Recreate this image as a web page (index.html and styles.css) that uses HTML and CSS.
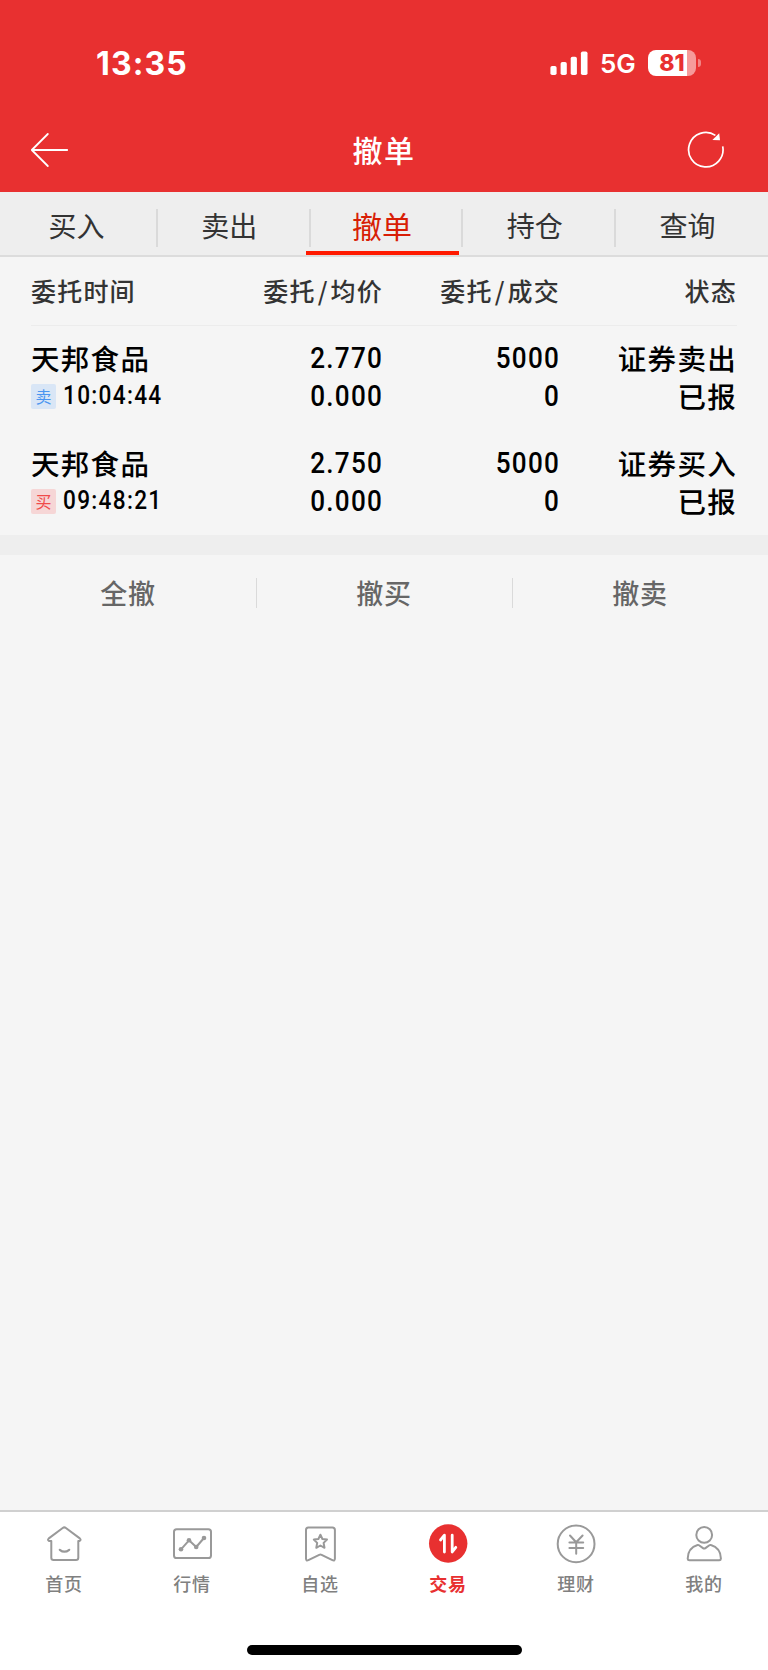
FILE: index.html
```html
<!DOCTYPE html>
<html lang="zh-CN">
<head>
  <meta charset="UTF-8">
  <meta name="viewport" content="width=device-width, initial-scale=1.0">
  <title>撤单</title>
  <link rel="stylesheet" href="styles.css">
</head>
<body>
  <div class="header">
    <div class="status-bar">
      <div class="status-time">13:35</div>
      <div class="status-right">
        <svg class="signal" width="38" height="25" viewBox="0 0 38 25" fill="#fff">
          <rect x="0.4" y="15" width="6.2" height="9" rx="1.8"/>
          <rect x="10.6" y="11" width="6.2" height="13" rx="1.8"/>
          <rect x="20.7" y="5.8" width="6.2" height="18.2" rx="1.8"/>
          <rect x="30.9" y="0.5" width="6.6" height="23.5" rx="1.8"/>
        </svg>
        <div class="network">5G</div>
        <div class="battery">81</div>
        <div class="battery-cap"></div>
      </div>
    </div>
    <div class="nav-bar">
      <svg width="40" height="40" viewBox="0 0 40 40" fill="none" stroke="#fff" stroke-width="1.8" stroke-linecap="round" stroke-linejoin="round">
        <path d="M17.8 4 L1.8 20 L17.8 36 M1.8 20 H37.2"/>
      </svg>
      <div class="nav-title">撤单</div>
      <svg width="40" height="40" viewBox="0 0 40 40" fill="none" stroke="#fff" stroke-width="1.7">
        <path d="M36.7 16.4 A17.2 17.2 0 1 1 29.4 5.4"/>
        <path d="M33.2 3.2 L34 10.3 L26.4 10.1 Z" fill="#fff" stroke="none"/>
      </svg>
    </div>
  </div>

  <div class="tabs">
    <div class="tab">买入</div>
    <div class="tab">卖出</div>
    <div class="tab active">撤单</div>
    <div class="tab">持仓</div>
    <div class="tab">查询</div>
  </div>

  <div class="orders">
    <div class="order-row order-head">
      <div>委托时间</div>
      <div>委托<span class="slash">/</span>均价</div>
      <div>委托<span class="slash">/</span>成交</div>
      <div>状态</div>
    </div>
    <div class="order-row">
      <div class="name">天邦食品</div>
      <div class="num">2.770</div>
      <div class="num">5000</div>
      <div class="state">证券卖出</div>
      <div class="time"><span class="tag sell">卖</span><span class="clock">10:04:44</span></div>
      <div class="num">0.000</div>
      <div class="num">0</div>
      <div class="state">已报</div>
    </div>
    <div class="order-row">
      <div class="name">天邦食品</div>
      <div class="num">2.750</div>
      <div class="num">5000</div>
      <div class="state">证券买入</div>
      <div class="time"><span class="tag buy">买</span><span class="clock">09:48:21</span></div>
      <div class="num">0.000</div>
      <div class="num">0</div>
      <div class="state">已报</div>
    </div>
  </div>

  <div class="actions">
    <div class="action">全撤</div>
    <div class="action">撤买</div>
    <div class="action">撤卖</div>
  </div>

  <div class="bottom-bar">
    <div class="menu">
      <div class="menu-item">
        <svg class="icon" viewBox="0 0 40 40">
          <path d="M7.3 17 H5.2 Q3 16 4.8 14.4 L18.7 4 Q20.3 2.8 21.9 4 L35.8 14.4 Q37.6 16 35.4 17 H34.3 V33.7 Q34.3 36 32 36 H9.6 Q7.3 36 7.3 33.7 Z"/>
          <path d="M15.8 25.8 Q20.4 29.6 25.2 25.8" stroke-width="2.2"/>
        </svg>
        <span>首页</span>
      </div>
      <div class="menu-item">
        <svg class="icon" viewBox="0 0 40 40">
          <rect x="2" y="5.2" width="37" height="28.8" rx="2.6"/>
          <path d="M9 25.3 L17 16.3 L24.2 23 L32 14"/>
          <g fill="#999" stroke="none">
            <circle cx="9" cy="25.3" r="2.3"/>
            <circle cx="17" cy="16.3" r="2.3"/>
            <circle cx="24.2" cy="23" r="2.3"/>
            <circle cx="32" cy="14" r="2.3"/>
          </g>
        </svg>
        <span>行情</span>
      </div>
      <div class="menu-item">
        <svg class="icon" viewBox="0 0 40 40">
          <path d="M8.3 3.4 H32.4 Q34.9 3.4 34.9 5.9 V34.6 Q34.9 37.3 32.4 36.1 L21.6 30.8 Q20.4 30.3 19.2 30.8 L8.4 36.1 Q6 37.3 6 34.6 V5.9 Q6 3.4 8.3 3.4 Z"/>
          <path d="M20.4 10.7 L22.4 15 L27 15.6 L23.6 18.9 L24.5 23.8 L20.4 21.5 L16.3 23.8 L17.2 18.9 L13.8 15.6 L18.4 15 Z"/>
        </svg>
        <span>自选</span>
      </div>
      <div class="menu-item active">
        <svg class="icon" viewBox="0 0 40 40">
          <circle cx="20.2" cy="19.5" r="19.2" fill="#e83030" stroke="none"/>
          <path d="M12.5 16 L16.4 11.2 V28 M24.2 11.2 V28 L27.8 23.3" stroke="#fff" stroke-width="2.8"/>
        </svg>
        <span>交易</span>
      </div>
      <div class="menu-item">
        <svg class="icon" viewBox="0 0 40 40">
          <circle cx="20.1" cy="19.9" r="18.4"/>
          <path d="M14 11.5 L20.2 18.2 L26.6 11.5 M13.4 18.6 H27.2 M13.4 24.1 H27.2 M20.2 18.2 V29.8"/>
        </svg>
        <span>理财</span>
      </div>
      <div class="menu-item">
        <svg class="icon" viewBox="0 0 40 40">
          <circle cx="20.2" cy="10.9" r="7.9"/>
          <path d="M13.5 21 Q14.3 20.7 15 21.2 L19 24.1 Q20.2 25 21.4 24.1 L25.4 21.2 Q26.1 20.7 26.9 21 Q36.8 24 36.9 34.6 Q36.8 36.2 35.2 36.2 H5.4 Q3.8 36.2 3.7 34.6 Q3.8 24 13.5 21 Z"/>
        </svg>
        <span>我的</span>
      </div>
    </div>
    <div class="home-indicator"></div>
  </div>
</body>
</html>
```
FILE: styles.css
```css
* {
  box-sizing: border-box;
}

body {
  margin: 0;
  height: 1670px;
  display: flex;
  flex-direction: column;
  background: #f5f5f5;
  color: #000;
  font-family: 'Noto Sans CJK SC', sans-serif;
}

.header {
  height: 192px;
  background: #e83030;
  color: #fff;
}

.status-bar {
  height: 108px;
  padding: 18px 67px 0 96px;
  display: flex;
  align-items: center;
  justify-content: space-between;
  font-family: Inter, sans-serif;
}

.status-time {
  font-size: 32px;
  font-weight: 700;
  letter-spacing: 1.1px;
}

.status-right {
  display: flex;
  align-items: center;
}

.network {
  margin: 2px 12px 0 12px;
  width: 36px;
  font-size: 26px;
  font-weight: 600;
  line-height: 26px;
}

.battery {
  width: 48px;
  height: 26px;
  border-radius: 8px;
  background: linear-gradient(to right, #fff 39px, #f69a9a 39px);
  color: #e83030;
  font-size: 23px;
  font-weight: 800;
  line-height: 26px;
  text-align: center;
}

.battery-cap {
  width: 3px;
  height: 8px;
  margin-left: 2px;
  border-radius: 0 3px 3px 0;
  background: #f28484;
}

.nav-bar {
  height: 84px;
  padding: 0 42px 0 30px;
  display: flex;
  align-items: center;
  justify-content: space-between;
}

.nav-title {
  margin-left: 12px;
  padding-bottom: 3px;
  font-size: 30px;
  font-weight: 500;
  letter-spacing: 1.5px;
}

.tabs {
  height: 65px;
  padding-right: 4px;
  display: flex;
  background: #eee;
  border-bottom: 2px solid #dcdcdc;
}

.tab {
  flex: 1;
  position: relative;
  color: #333;
  font-size: 28px;
  line-height: 67px;
  text-align: center;
}

/* separator between two tabs */
.tab:not(:last-child)::after {
  content: '';
  position: absolute;
  top: 17px;
  right: -5px;
  width: 2px;
  height: 38px;
  background: #dadada;
}

.tab.active {
  color: #d81e06;
  font-size: 30px;
}

.tab.active::before {
  content: '';
  position: absolute;
  left: 0;
  bottom: 0;
  width: 153px;
  height: 4px;
  background: #ff1a00;
}

.orders {
  height: 278px;
  padding: 0 31px;
}

.order-row {
  display: grid;
  grid-template-columns: 175px 177px 177px 177px;
  grid-template-rows: 38px 38px;
  height: 105px;
  padding-top: 13px;
  line-height: 38px;
}

.order-row > div {
  text-align: right;
  white-space: nowrap;
}

.order-row > div:nth-child(4n+1) {
  text-align: left;
}

.order-head {
  grid-template-rows: 68px;
  height: 69px;
  padding-top: 0;
  border-bottom: 1px solid #ececec;
  color: #333;
  font-size: 25px;
  font-weight: 500;
  letter-spacing: 1.2px;
  line-height: 67px;
}

.slash {
  padding: 0 2px;
}

.name,
.state {
  font-size: 28.5px;
  font-weight: 500;
  letter-spacing: 1.3px;
}

/* digits are set narrower than Roboto's own width */
.num {
  font-family: Roboto, sans-serif;
  font-size: 30px;
  font-weight: 500;
  letter-spacing: 1.4px;
  transform: scaleX(0.87);
  transform-origin: right;
}

.time {
  display: flex;
  align-items: center;
}

.clock {
  font-family: Roboto, sans-serif;
  font-size: 26px;
  font-weight: 500;
  letter-spacing: 1.5px;
  line-height: 36px;
  padding-bottom: 2px;
  transform: scaleX(0.87);
  transform-origin: left;
}

.tag {
  width: 25px;
  height: 25px;
  margin-right: 7px;
  border-radius: 2px;
  font-size: 16px;
  line-height: 24px;
  text-align: center;
}

.tag.sell {
  background: #d9e6f6;
  color: #4b96f0;
}

.tag.buy {
  background: #f6d6d6;
  color: #f04b4b;
}

.actions {
  height: 96px;
  display: flex;
  border-top: 20px solid #eee;
}

.action {
  flex: 1;
  position: relative;
  color: #666;
  font-size: 27px;
  font-weight: 500;
  letter-spacing: 0.8px;
  line-height: 75px;
  text-align: center;
}

.action:not(:last-child)::after {
  content: '';
  position: absolute;
  top: 23px;
  right: -1px;
  width: 1px;
  height: 30px;
  background: #dadada;
}

.bottom-bar {
  height: 160px;
  margin-top: auto;
  display: flex;
  flex-direction: column;
  align-items: center;
  justify-content: space-between;
  padding: 12px 0 15px;
  border-top: 2px solid #d0d0d0;
  background: #fff;
}

.menu {
  width: 100%;
  display: flex;
}

.menu-item {
  flex: 1;
  display: flex;
  flex-direction: column;
  align-items: center;
  color: #808080;
  font-size: 18px;
  font-weight: 500;
  letter-spacing: 0.8px;
  line-height: 38px;
}

.menu-item.active {
  color: #e83030;
  font-weight: 700;
}

.icon {
  width: 40px;
  height: 40px;
  fill: none;
  stroke: #999;
  stroke-width: 2;
  stroke-linecap: round;
  stroke-linejoin: round;
}

.home-indicator {
  width: 275px;
  height: 10px;
  border-radius: 5px;
  background: #000;
}
```
